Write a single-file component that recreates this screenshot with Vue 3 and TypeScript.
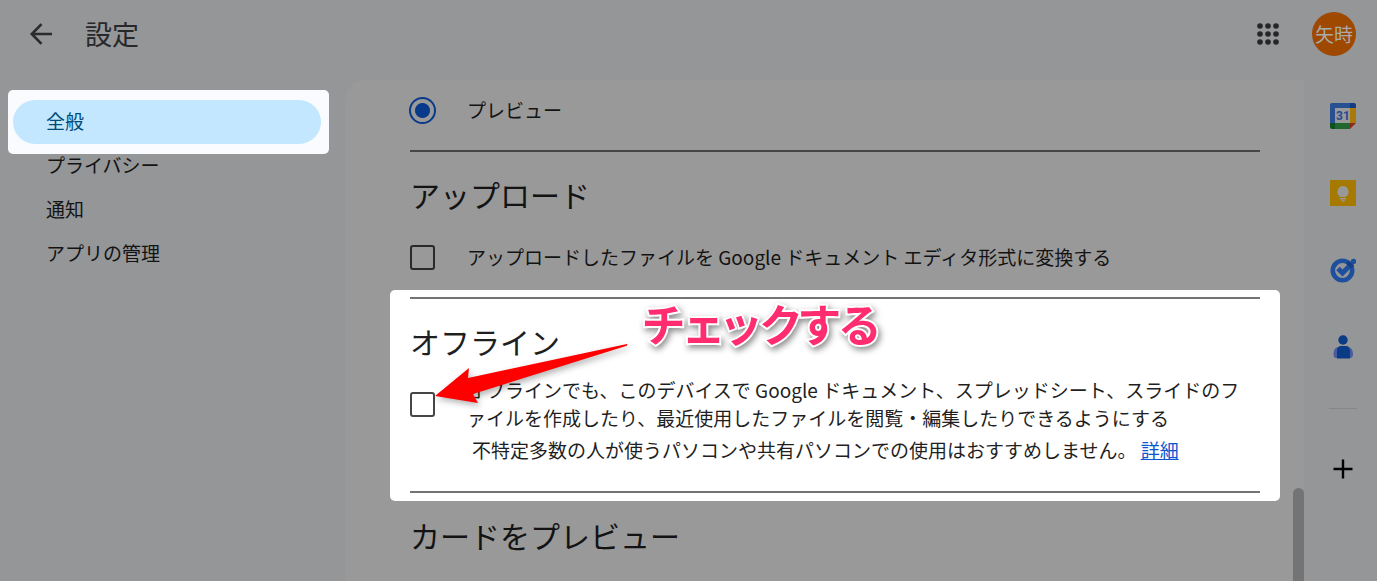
<script setup lang="ts">
import { ref } from 'vue'

const layout = ref('preview')
const convertUploads = ref(false)
const offline = ref(false)
const navItems: string[] = ['プライバシー', '通知', 'アプリの管理']
const dots: number[] = [4, 12, 20]
</script>

<template>
  <div class="page">
    <header class="topbar">
      <button class="icon-button" type="button" aria-label="戻る">
        <svg width="24" height="24" viewBox="0 0 24 24" fill="none" stroke="#2a2b2d" stroke-width="2.6">
          <path d="M23 12H3M12.500 2.200L2.800 12L12.500 21.800" />
        </svg>
      </button>
      <h1 class="title">設定</h1>
      <button class="icon-button apps" type="button" aria-label="アプリ">
        <svg width="24" height="24" viewBox="0 0 24 24" fill="#252628">
          <template v-for="y in dots" :key="y">
            <circle v-for="x in dots" :key="x" :cx="x" :cy="y" r="2.8" />
          </template>
        </svg>
      </button>
      <button class="avatar" type="button">矢時</button>
    </header>

    <div class="body">
      <nav class="sidebar">
        <div class="nav-spotlight">
          <a class="nav-link active" href="#general">全般</a>
        </div>
        <div class="nav-rest">
          <a v-for="item in navItems" :key="item" class="nav-link" href="#settings">{{ item }}</a>
        </div>
      </nav>

      <main class="panel">
        <div class="content">
          <label class="option">
            <input v-model="layout" class="radio" type="radio" name="layout" value="preview" />
            <span>プレビュー</span>
          </label>

          <section class="section upload">
            <h2>アップロード</h2>
            <label class="option">
              <input v-model="convertUploads" class="check" type="checkbox" />
              <span>アップロードしたファイルを Google ドキュメント エディタ形式に変換する</span>
            </label>
          </section>

          <div class="spotlight">
            <section class="section offline">
              <h2>オフライン</h2>
              <label class="option">
                <input v-model="offline" class="check" type="checkbox" />
                <span>オフラインでも、このデバイスで Google ドキュメント、スプレッドシート、スライドのファイルを作成したり、最近使用したファイルを閲覧・編集したりできるようにする</span>
              </label>
              <p class="note">不特定多数の人が使うパソコンや共有パソコンでの使用はおすすめしません。 <a href="#details">詳細</a></p>
            </section>
            <svg class="arrow" width="204" height="74" viewBox="430 336 204 74">
              <path d="M435 396L469 368L468 378L627 344Q628 345 626 346L473 394L478 403Z" fill="#ff0000" />
            </svg>
            <div class="callout">チェックする</div>
          </div>

          <section class="section cards">
            <h2>カードをプレビュー</h2>
          </section>
        </div>
        <div class="scrollbar"></div>
      </main>

      <aside class="rail">
        <button class="icon-button" type="button" aria-label="カレンダー">
          <svg width="26" height="26" viewBox="0 0 26 26">
            <path d="M2 0H20V5H5V20H0V2Q0 0 2 0Z" fill="#275092" />
            <path d="M20 0H24Q26 0 26 2V5H20Z" fill="#103b85" />
            <path d="M20 5H26V20H20Z" fill="#a9790a" />
            <path d="M5 20H20V26H5Z" fill="#20662f" />
            <path d="M0 20H5V26H2Q0 26 0 24Z" fill="#0e501f" />
            <path d="M20 20H26L20 26Z" fill="#8e2a20" />
            <path d="M5 5H20V20H5Z" fill="#999999" />
            <text x="13" y="17" text-anchor="middle" class="day">31</text>
          </svg>
        </button>
        <button class="icon-button" type="button" aria-label="Keep">
          <svg width="26" height="26" viewBox="0 0 26 26">
            <rect width="26" height="26" rx="1" fill="#a67900" />
            <path d="M13 6A5.800 5.800 0 0 0 10 16.600V17H16V16.600A5.800 5.800 0 0 0 13 6ZM10 18H16V19.400H10ZM11 20.200H15L14.500 21.400H11.500Z" fill="#999999" />
          </svg>
        </button>
        <button class="icon-button" type="button" aria-label="ToDo リスト">
          <svg width="26" height="26" viewBox="0 0 26 26" fill="none">
            <circle cx="12.500" cy="13.500" r="9.700" stroke="#1d4f9c" stroke-width="4.600" />
            <path d="M8 11.500L12.500 16L22 6.500" stroke="#1d4f9c" stroke-width="5" />
            <path d="M17.500 5L22.500 10" stroke="#153f86" stroke-width="4.500" />
            <circle cx="23.500" cy="4.500" r="2.700" fill="#1d4f9c" />
          </svg>
        </button>
        <button class="icon-button" type="button" aria-label="連絡先">
          <svg width="26" height="26" viewBox="0 0 26 26">
            <circle cx="13" cy="6" r="4.700" fill="#0a3b85" />
            <path d="M8 13H18Q23 14 23 20Q23 24 20 24H6Q3.500 24 3.500 20Q3.500 14 8 13Z" fill="#4b5aa3" />
            <path d="M10 12H17Q20 13 20 17V24.500H7V17Q7 13 10 12Z" fill="#0a3b85" />
          </svg>
        </button>
        <hr />
        <button class="icon-button" type="button" aria-label="アドオンを取得">
          <svg width="26" height="26" viewBox="0 0 26 26" stroke="#000" stroke-width="2.400">
            <path d="M3.500 13H22.500M13 3.500V22.500" />
          </svg>
        </button>
      </aside>
    </div>
  </div>
</template>

<style>
html,
body {
  background: #959698;
}
</style>

<style scoped>
.page {
  display: flex;
  flex-direction: column;
  height: 100vh;
  overflow: hidden;
  color: #131313;
  background: #959698;
  font-family: "Noto Sans CJK JP", "Noto Sans", sans-serif;
  font-size: 19px;
  line-height: 28px;
}
h1,
h2,
p {
  margin: 0;
  font-weight: 400;
}
.icon-button {
  display: flex;
  padding: 0;
  border: 0;
  background: none;
}
.topbar {
  display: flex;
  flex: none;
  align-items: center;
  height: 44px;
  padding: 12px 21px 24px 29px;
}
.title {
  margin-left: 32px;
  color: #27282a;
  font-size: 27px;
  line-height: 44px;
}
.apps {
  margin: 0 32px 0 auto;
}
.avatar {
  width: 44px;
  height: 44px;
  padding: 0;
  border: 0;
  border-radius: 50%;
  background: #9f4900;
  color: #aaa;
  font: inherit;
}
.body {
  display: flex;
  flex: 1;
  min-height: 0;
}
.sidebar {
  flex: none;
  width: 321px;
  padding: 10px 16px 0 8px;
}
.nav-spotlight {
  padding: 10px 8px 10px 5px;
  border-radius: 5px;
  background: #fafbfe;
}
.nav-rest {
  margin-top: -10px;
  padding-left: 5px;
}
.nav-link {
  display: block;
  padding: 0 0 2px 33px;
  border-radius: 22px;
  color: #131313;
  line-height: 42px;
  text-decoration: none;
}
.active {
  background: #c2e7ff;
  color: #004a77;
}
.panel {
  display: flex;
  flex: 1;
  min-width: 0;
  border-radius: 20px 0 0 0;
  background: #999;
}
.content {
  flex: 1;
  min-width: 0;
  padding: 16px 33px 0 65px;
}
.option {
  display: flex;
  align-items: center;
  gap: 32px;
  min-height: 28px;
}
.radio,
.check {
  flex: none;
  box-sizing: border-box;
  width: 25px;
  height: 25px;
  margin: 0;
  appearance: none;
}
.radio {
  width: 27px;
  height: 27px;
  margin: 0 -1px;
  border: 2px solid #08398a;
  border-radius: 50%;
}
.radio:checked {
  background: radial-gradient(circle, #08398a 7px, transparent 8px);
}
.check {
  border: 2px solid #292a2a;
  border-radius: 3px;
}
.section {
  border-top: 2px solid #464646;
}
.section h2 {
  padding-top: 20px;
  font-size: 30px;
  line-height: 44px;
}
.upload {
  margin: 26px 0 19px;
}
.upload .option {
  margin-top: 27px;
}
.spotlight {
  position: relative;
  margin: 0 -20px;
  padding: 7px 20px 8px;
  border-radius: 5px;
  background: #fff;
}
.offline {
  padding-bottom: 27px;
  border-color: #747474;
  border-bottom: 2px solid #747474;
  color: #1f1f1f;
}
.offline .check {
  border-color: #444746;
}
.offline .option {
  margin-top: 13px;
  padding-right: 8px;
}
.note {
  margin: 4px 0 0 62px;
}
.note a {
  color: #0b57d0;
}
.arrow {
  position: absolute;
  top: 46px;
  left: 40px;
  filter: drop-shadow(2px 3px 3px rgba(0, 0, 0, 0.3));
}
.callout {
  position: absolute;
  top: 0;
  left: 253px;
  color: #ff2d70;
  font-size: 44px;
  font-weight: 700;
  font-feature-settings: "palt";
  line-height: 66px;
  white-space: nowrap;
  -webkit-text-stroke: 4px #fff;
  paint-order: stroke fill;
  filter: drop-shadow(2px 3px 3px rgba(0, 0, 0, 0.45));
}
.cards {
  border-top: 0;
}
.cards h2 {
  padding-top: 12px;
}
.scrollbar {
  align-self: flex-end;
  width: 11px;
  height: 93px;
  border-radius: 6px 6px 0 0;
  background: #747474;
}
.rail {
  display: flex;
  flex: none;
  flex-direction: column;
  align-items: center;
  gap: 51px;
  width: 68px;
  padding: 23px 0 0 5px;
}
.rail hr {
  width: 28px;
  margin: -3px 0 -4px;
  border: 0;
  border-top: 1px solid #868789;
}
.day {
  fill: #234a91;
  font-family: Roboto, sans-serif;
  font-size: 12px;
  font-weight: 700;
}
</style>
